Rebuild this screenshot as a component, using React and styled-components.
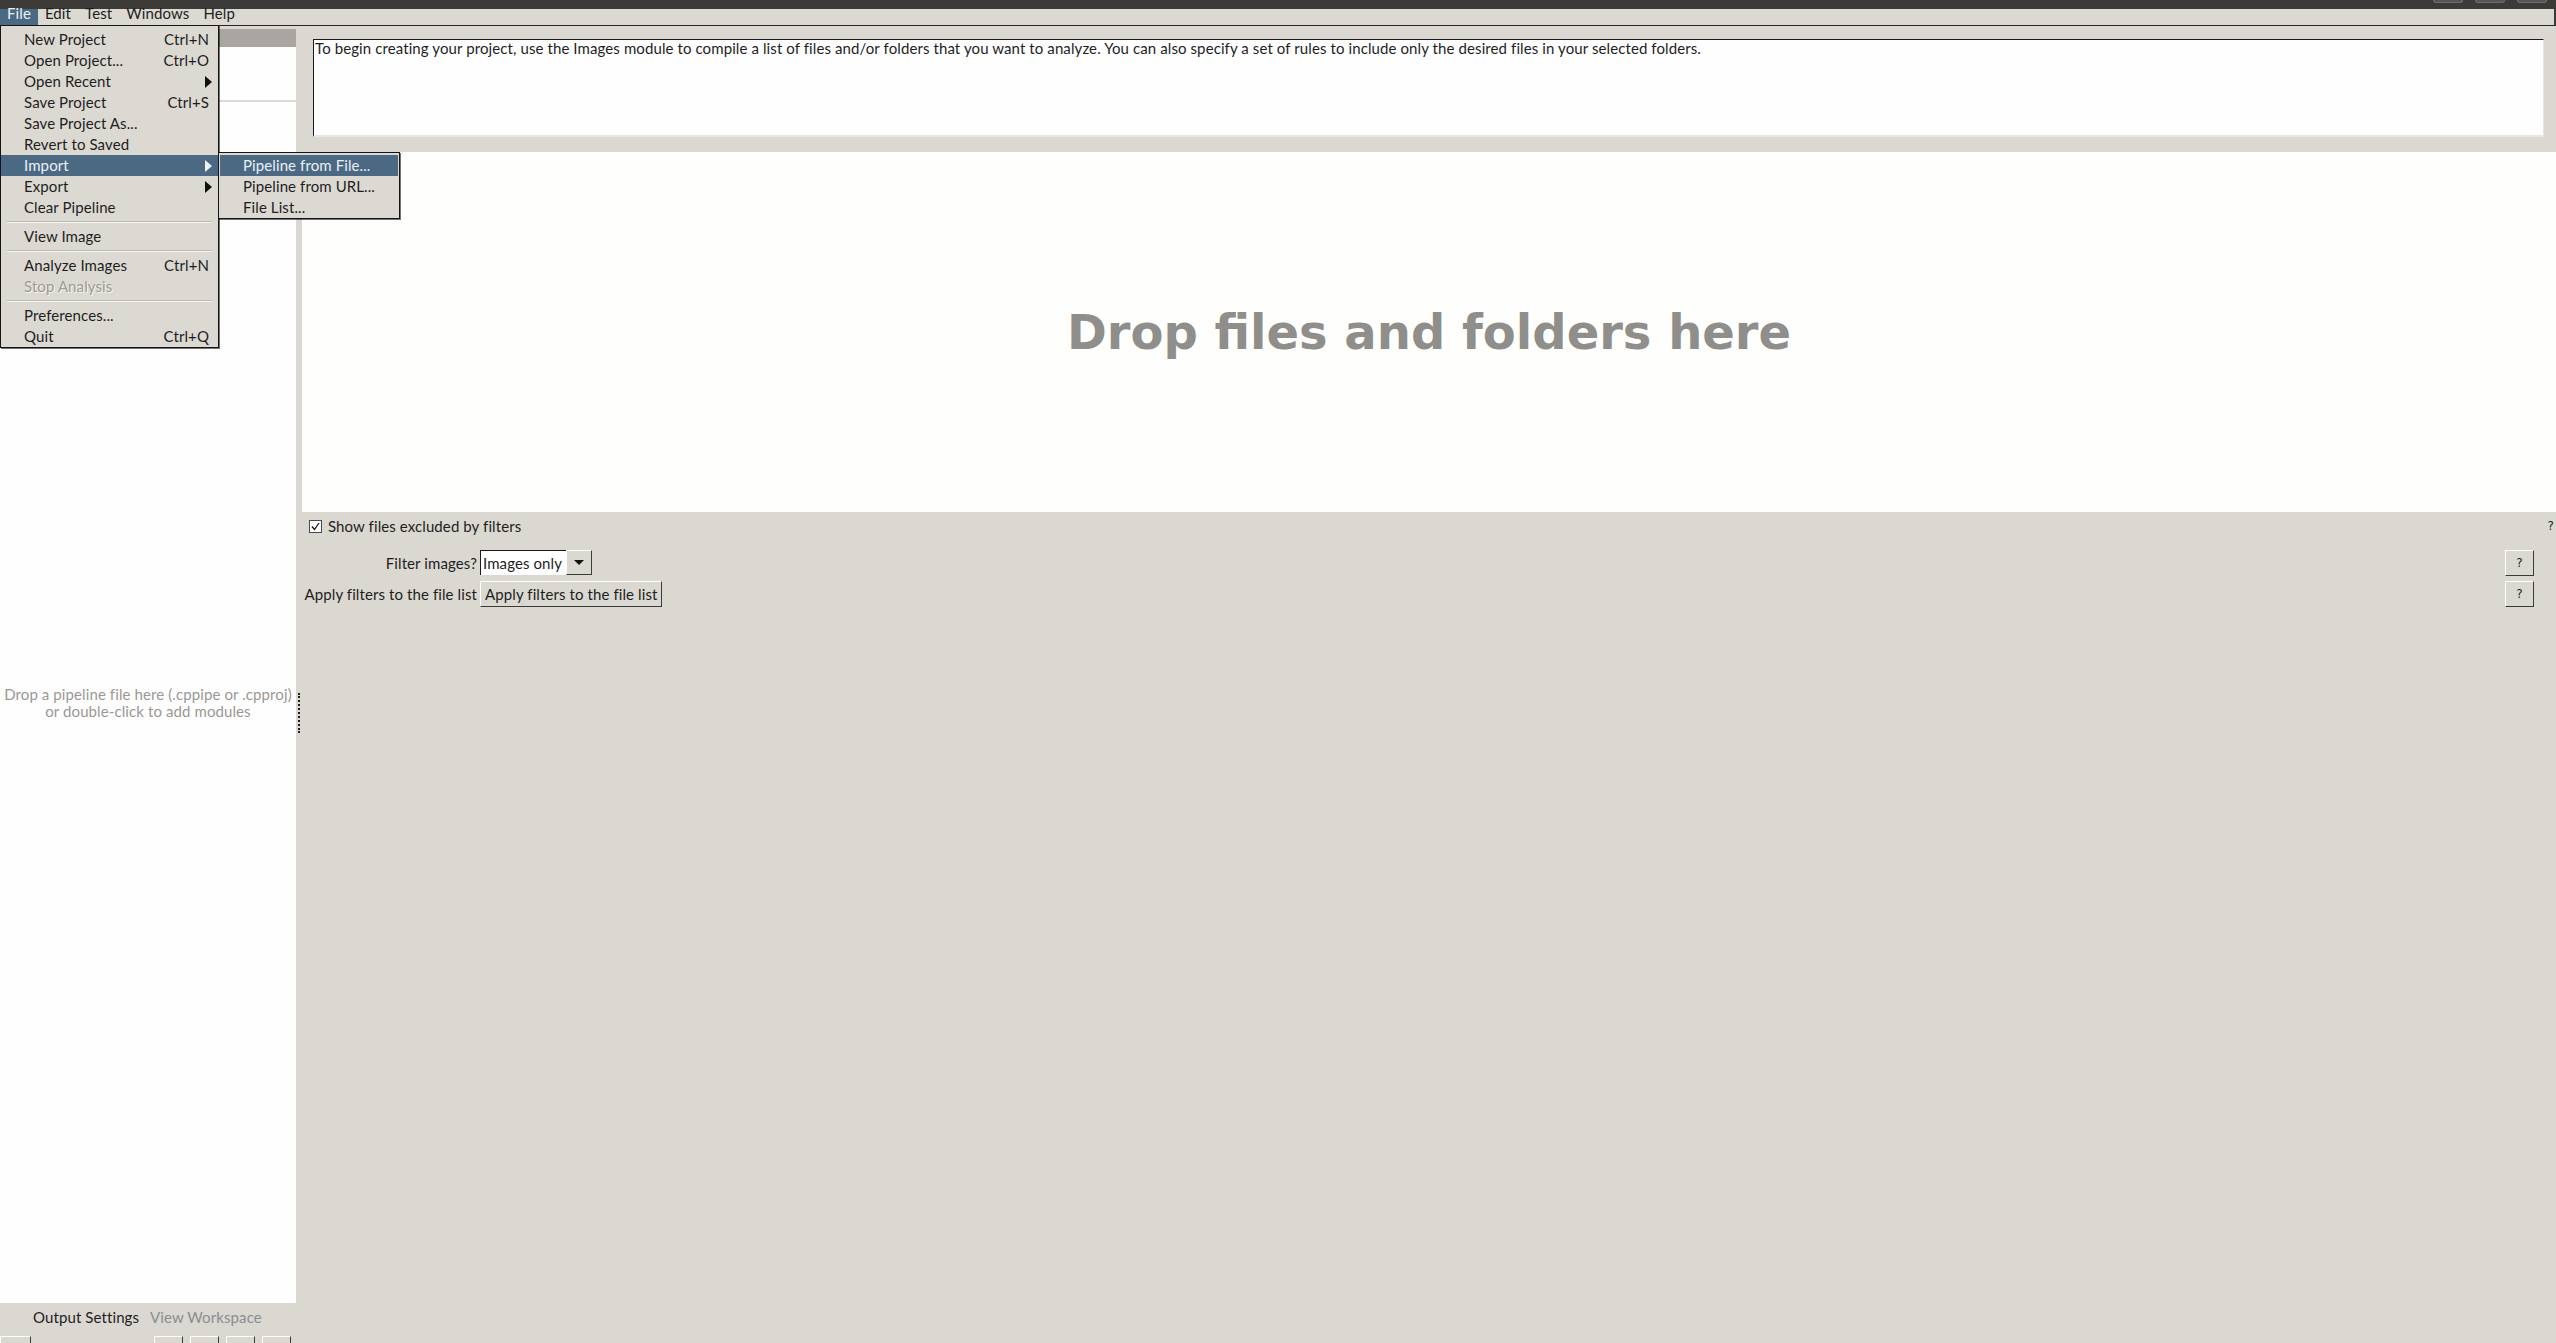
import React from 'react';
import styled, { createGlobalStyle } from 'styled-components';

const GlobalStyle = createGlobalStyle`
  html, body { margin: 0; padding: 0; height: 100%; overflow: hidden; background: #dbd8d2; }
  #root { height: 100%; }
  *, *::before, *::after { box-sizing: border-box; }
`;

const Window = styled.div`
  position: relative;
  width: 2556px;
  height: 1343px;
  display: flex;
  flex-direction: column;
  background: #dbd8d2;
  font-family: Lato, "Noto Sans", sans-serif;
  font-size: 15px;
  letter-spacing: 0.1px;
  color: #1e1e1e;
  overflow: hidden;
`;

const TitleBar = styled.div`
  height: 9px;
  flex: none;
  background: #3c3b37;
  display: flex;
  justify-content: flex-end;
  align-items: flex-start;
  gap: 12px;
  padding-right: 9px;
`;

const WinButton = styled.div`
  width: 30px;
  height: 3px;
  background: #575651;
  border: 1px solid #6e6d68;
  border-top: none;
  border-radius: 0 0 6px 6px;
`;

const MenuBar = styled.div`
  height: 17px;
  flex: none;
  display: flex;
  background: #dcd9d3;
  border-bottom: 1px solid #262626;
  border-right: 2px solid #3a3a3a;
`;

const MenuBarItem = styled.div`
  height: 16px;
  padding: 0 7px;
  line-height: 8px;
  background: ${(p) => (p.$active ? '#4b6983' : 'transparent')};
  color: ${(p) => (p.$active ? '#eef3f8' : '#1e1e1e')};
`;

const Body = styled.div`
  flex: 1;
  min-height: 0;
  display: flex;
`;

const LeftColumn = styled.div`
  width: 296px;
  flex: none;
  display: flex;
  flex-direction: column;
  padding-top: 3px;
`;

const ListHeader = styled.div`
  height: 18px;
  flex: none;
  background: #a9a6a1;
`;

const ModuleList = styled.div`
  height: 53px;
  flex: none;
  background: #fefefe;
`;

const Divider = styled.div`
  height: 2px;
  flex: none;
  background: #dcdad6;
`;

const PipelineArea = styled.div`
  flex: 1;
  min-height: 0;
  background: #fefefe;
  display: flex;
  align-items: center;
  justify-content: center;
  text-align: center;
  color: #9b9894;
  line-height: 17px;
  white-space: nowrap;
`;

const Tabs = styled.div`
  height: 33px;
  flex: none;
  display: flex;
  align-items: flex-start;
  gap: 11px;
  padding: 5px 0 0 33px;
  line-height: 18px;
`;

const Tab = styled.div`
  color: ${(p) => (p.$muted ? '#8a8d91' : '#1e1e1e')};
`;

const ButtonRow = styled.div`
  height: 7px;
  flex: none;
  overflow: hidden;
  display: flex;
  padding-right: 5px;
`;

const ButtonGroup = styled.div`
  display: flex;
  gap: 7px;
  margin-left: auto;
`;

const ToolButton = styled.div`
  width: ${(p) => p.$w || 29}px;
  height: 26px;
  background: #dbd8d2;
  border-top: 1px solid #ffffff;
  border-left: 1px solid #ffffff;
  border-right: 1px solid #3a3a3a;
`;

const Splitter = styled.div`
  width: 6px;
  flex: none;
  display: flex;
  justify-content: center;
  padding-top: 667px;
`;

const Grip = styled.div`
  width: 3px;
  height: 40px;
  border-left: 2px dotted #1e1e1e;
`;

const RightColumn = styled.div`
  flex: 1;
  min-width: 0;
  display: flex;
  flex-direction: column;
`;

const InstructionsWrap = styled.div`
  padding: 13px 12px 15px 11px;
`;

const Instructions = styled.div`
  height: 98px;
  background: #fefefe;
  border-top: 1px solid #1a1a1a;
  border-left: 1px solid #1a1a1a;
  border-right: 1px solid #e6e6e4;
  border-bottom: 2px solid #e6e6e4;
  padding: 0 1px;
  line-height: 17px;
  font-size: 15px;
  letter-spacing: 0.1px;
  white-space: nowrap;
`;

const DropZone = styled.div`
  height: 360px;
  flex: none;
  background: #fefefd;
  display: flex;
  align-items: center;
  justify-content: center;
  font-family: "DejaVu Sans", sans-serif;
  font-weight: bold;
  font-size: 48px;
  letter-spacing: 0;
  color: #8f8e8a;
`;

const CheckRow = styled.div`
  height: 28px;
  display: flex;
  align-items: center;
  padding: 0 2px 0 7px;
  gap: 6px;
`;

const HelpMark = styled.span`
  margin-left: auto;
  font-family: "DejaVu Sans", sans-serif;
  font-size: 12px;
`;

const FilterGrid = styled.div`
  margin-top: 10px;
  display: grid;
  grid-template-columns: 175px 1fr 29px;
  grid-auto-rows: auto;
  column-gap: 3px;
  row-gap: 5px;
  padding-right: 22px;
`;

const FieldLabel = styled.div`
  align-self: center;
  text-align: right;
  white-space: nowrap;
`;

const Select = styled.div`
  display: flex;
  justify-self: start;
  height: 25px;
`;

const SelectField = styled.div`
  width: 86px;
  height: 25px;
  background: #ffffff;
  border-top: 1px solid #1a1a1a;
  border-left: 1px solid #1a1a1a;
  padding-left: 2px;
  line-height: 24px;
  white-space: nowrap;
`;

const raised = `
  background: #dbd8d2;
  border-top: 1px solid #ffffff;
  border-left: 1px solid #ffffff;
  border-right: 1px solid #3a3a3a;
  border-bottom: 1px solid #3a3a3a;
`;

const SelectButton = styled.div`
  ${raised}
  width: 26px;
  height: 25px;
  display: flex;
  align-items: center;
  justify-content: center;
`;

const DownArrow = styled.div`
  width: 0;
  height: 0;
  border-left: 5px solid transparent;
  border-right: 5px solid transparent;
  border-top: 5px solid #111;
`;

const PushButton = styled.div`
  ${raised}
  justify-self: start;
  width: 182px;
  height: 26px;
  padding-left: 4px;
  line-height: 24px;
  white-space: nowrap;
`;

const HelpButton = styled.div`
  ${raised}
  width: 29px;
  height: 26px;
  display: flex;
  align-items: center;
  justify-content: center;
  font-family: "DejaVu Sans", sans-serif;
  font-size: 12px;
`;

/* menus (overlay) */
const Menu = styled.div`
  position: absolute;
  left: ${(p) => p.$x}px;
  top: ${(p) => p.$y}px;
  width: ${(p) => p.$w}px;
  background: #dcd9d3;
  border: 1px solid #151515;
  box-shadow: 1px 1px 0 rgba(0, 0, 0, 0.55);
  padding: ${(p) => p.$pad || '3px 0 0 0'};
  z-index: 10;
`;

const MenuItem = styled.div`
  height: 21px;
  display: flex;
  align-items: center;
  padding: 0 9px 2px ${(p) => p.$indent || 23}px;
  background: ${(p) => (p.$active ? '#4b6983' : 'transparent')};
  color: ${(p) => (p.$active ? '#e9f0f7' : p.$disabled ? '#9d9b96' : '#1e1e1e')};
  text-shadow: ${(p) => (p.$disabled ? '1px 1px 0 #f4f3f0' : 'none')};
  white-space: nowrap;
`;

const Shortcut = styled.span`
  margin-left: auto;
`;

const SubArrow = styled.span`
  margin-left: auto;
  margin-right: -3px;
  margin-top: 2px;
  width: 0;
  height: 0;
  border-top: 6px solid transparent;
  border-bottom: 6px solid transparent;
  border-left: 7px solid ${(p) => (p.$active ? '#f2f5f8' : '#111')};
`;

const Separator = styled.div`
  height: 8px;
  display: flex;
  align-items: center;
  padding: 0 6px 0 6px;
  &::after {
    content: '';
    flex: 1;
    height: 2px;
    border-top: 1px solid #bcb9b3;
    border-bottom: 1px solid #f5f4f1;
  }
`;

const CheckBox = () => (
  <svg width="13" height="13" viewBox="0 0 13 13">
    <rect x="0.5" y="0.5" width="12" height="12" fill="#fff" stroke="#4a4a4a" />
    <polyline points="3,6.5 5.5,9.5 10,3" fill="none" stroke="#111" strokeWidth="1.3" />
  </svg>
);

const fileItems = [
  { label: 'New Project', key: 'Ctrl+N' },
  { label: 'Open Project...', key: 'Ctrl+O' },
  { label: 'Open Recent', sub: true },
  { label: 'Save Project', key: 'Ctrl+S' },
  { label: 'Save Project As...' },
  { label: 'Revert to Saved' },
  { label: 'Import', sub: true, active: true },
  { label: 'Export', sub: true },
  { label: 'Clear Pipeline' },
  { sep: true },
  { label: 'View Image' },
  { sep: true },
  { label: 'Analyze Images', key: 'Ctrl+N' },
  { label: 'Stop Analysis', disabled: true },
  { sep: true },
  { label: 'Preferences...' },
  { label: 'Quit', key: 'Ctrl+Q' },
];

const importItems = ['Pipeline from File...', 'Pipeline from URL...', 'File List...'];

export default function App() {
  return (
    <>
      <GlobalStyle />
      <Window>
        <TitleBar>
          <WinButton />
          <WinButton />
          <WinButton />
        </TitleBar>
        <MenuBar>
          <MenuBarItem $active>File</MenuBarItem>
          <MenuBarItem>Edit</MenuBarItem>
          <MenuBarItem>Test</MenuBarItem>
          <MenuBarItem>Windows</MenuBarItem>
          <MenuBarItem>Help</MenuBarItem>
        </MenuBar>
        <Body>
          <LeftColumn>
            <ListHeader />
            <ModuleList />
            <Divider />
            <PipelineArea>
              Drop a pipeline file here (.cppipe or .cpproj)
              <br />
              or double-click to add modules
            </PipelineArea>
            <Tabs>
              <Tab>Output Settings</Tab>
              <Tab $muted>View Workspace</Tab>
            </Tabs>
            <ButtonRow>
              <ToolButton $w={31} />
              <ButtonGroup>
                <ToolButton />
                <ToolButton />
                <ToolButton />
                <ToolButton />
              </ButtonGroup>
            </ButtonRow>
          </LeftColumn>
          <Splitter>
            <Grip />
          </Splitter>
          <RightColumn>
            <InstructionsWrap>
              <Instructions>
                To begin creating your project, use the Images module to compile a list of files and/or folders that you want to analyze. You can also specify a set of rules to include only the desired files in your selected folders.
              </Instructions>
            </InstructionsWrap>
            <DropZone>Drop files and folders here</DropZone>
            <CheckRow>
              <CheckBox />
              <span>Show files excluded by filters</span>
              <HelpMark>?</HelpMark>
            </CheckRow>
            <FilterGrid>
              <FieldLabel>Filter images?</FieldLabel>
              <Select>
                <SelectField>Images only</SelectField>
                <SelectButton>
                  <DownArrow />
                </SelectButton>
              </Select>
              <HelpButton>?</HelpButton>
              <FieldLabel>Apply filters to the file list</FieldLabel>
              <PushButton>Apply filters to the file list</PushButton>
              <HelpButton>?</HelpButton>
            </FilterGrid>
          </RightColumn>
        </Body>

        <Menu $x={0} $y={25} $w={219}>
          {fileItems.map((it, i) =>
            it.sep ? (
              <Separator key={i} />
            ) : (
              <MenuItem key={i} $active={it.active} $disabled={it.disabled}>
                {it.label}
                {it.key && <Shortcut>{it.key}</Shortcut>}
                {it.sub && <SubArrow $active={it.active} />}
              </MenuItem>
            )
          )}
        </Menu>
        <Menu $x={218} $y={152} $w={182} $pad="2px 1px 0 1px">
          {importItems.map((label, i) => (
            <MenuItem key={label} $active={i === 0}>
              {label}
            </MenuItem>
          ))}
        </Menu>
      </Window>
    </>
  );
}
